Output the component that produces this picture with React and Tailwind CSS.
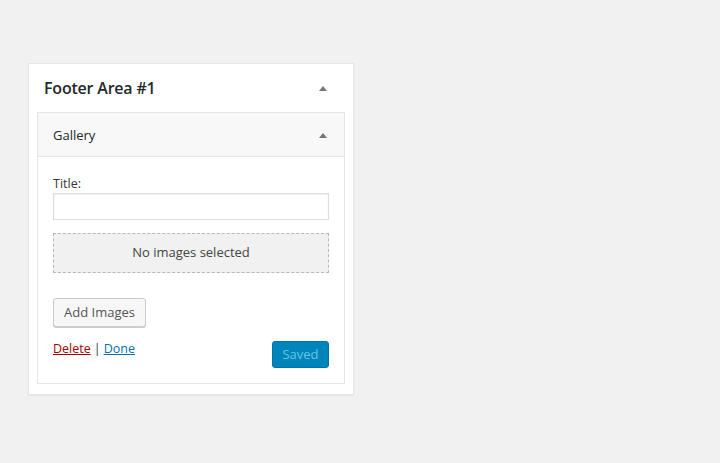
import React from "react";

function Caret() {
  return (
    <svg width="10" height="6" viewBox="0 0 10 6" className="block">
      <path d="M1 6 L5 1 L9 6 Z" fill="#72777c" />
    </svg>
  );
}

export default function App() {
  return (
    <div
      className="min-h-[463px] w-full bg-[#f1f1f1] pl-[28px] pt-[63px] text-[#23282d]"
      style={{ fontFamily: '"Open Sans", "Noto Sans", sans-serif' }}
    >
      <div className="w-[326px] border border-[#e5e5e5] bg-white shadow-[0_1px_1px_rgba(0,0,0,0.04)]">
        <div className="flex h-[48px] items-center justify-between pl-[15px] pr-[25px]">
          <span className="text-[16px] font-semibold leading-none tracking-[-0.2px]">Footer Area #1</span>
          <Caret />
        </div>
        <div className="mx-[8px] mb-[10px] border border-[#e5e5e5]">
          <div className="flex h-[44px] items-center justify-between border-b border-[#e5e5e5] bg-[#f8f8f8] pl-[15px] pr-[16px]">
            <span className="pt-[1px] text-[13px] leading-none">Gallery</span>
            <Caret />
          </div>
          <div className="bg-white px-[15px] pb-[15px] pt-[18px]">
            <div className="text-[12.5px] leading-[18px] text-[#32373c]">Title:</div>
            <div className="h-[27px] w-full border border-[#ddd] bg-white shadow-[inset_0_1px_2px_rgba(0,0,0,0.07)]" />
            <div className="mt-[13px] flex h-[40px] items-center justify-center border border-dashed border-[#b4b9be] bg-[#f1f1f1] text-[13px] text-[#444]">
              No images selected
            </div>
            <div className="mt-[25px]">
              <button className="h-[29px] rounded-[3px] border border-[#ccc] bg-[#f7f7f7] px-[10px] text-[13px] text-[#555] shadow-[0_1px_0_#ccc]">
                Add Images
              </button>
            </div>
            <div className="mt-[14px] flex items-start justify-between">
              <div className="-mt-[1px] text-[12.5px] leading-[18px] text-[#32373c]">
                <a className="text-[#a00] underline">Delete</a>
                <span className="px-[3px]">|</span>
                <a className="text-[#0073aa] underline">Done</a>
              </div>
              <button className="h-[27px] w-[57px] rounded-[3px] border border-[#0073aa] bg-[#0085ba] text-[13px] text-[#66c6e4]">
                Saved
              </button>
            </div>
          </div>
        </div>
      </div>
    </div>
  );
}
